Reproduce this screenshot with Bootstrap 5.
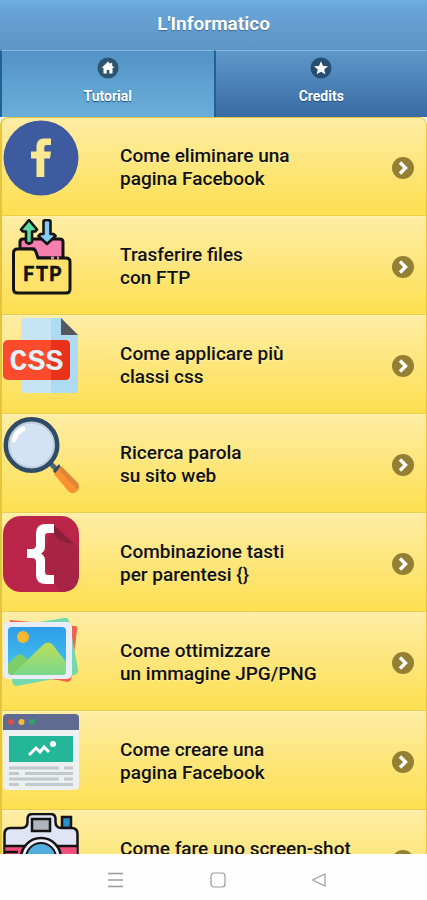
<!DOCTYPE html>
<html lang="it">
<head>
<meta charset="utf-8">
<meta name="viewport" content="width=device-width, initial-scale=1">
<title>L'Informatico</title>
<link href="https://cdn.jsdelivr.net/npm/bootstrap@5.3.0/dist/css/bootstrap.min.css" rel="stylesheet">
<style>
  body { font-family: Roboto, "Liberation Sans", sans-serif; background: #fff; }
  .app-bar { height: 50px; padding-bottom: 2px; background: linear-gradient(#6faee0, #69a3d6 20%, #5f94c6); color: #fff; }
  .app-title { font-size: 19px; line-height: 24px; font-weight: 700; text-shadow: 0 1px 1px #3e6790; }
  .tab-link { height: 67px; padding-top: 6px; color: #fff; font-size: 14px; line-height: 18px; font-weight: 700;
    text-decoration: none; text-shadow: 0 1px 1px #194b7e; border-left: 2px solid #1f6396; border-top: 1px solid #85b8e2;
    background: linear-gradient(#5f97c9, #396ba3); }
  .tab-link.active { background: linear-gradient(#5393c5, #6aaeda); }
  .tab-icon { width: 22px; height: 22px; }
  .topics { background: #fde050; border: 1px solid #e8c43c; border-width: 1px 1px 0 2px; border-radius: 8px 8px 0 0; }
  .topic { height: 99px; padding: 2px 12px 0 1px; color: #111; text-decoration: none;
    border-top: 1px solid #fff2b4; border-bottom: 1px solid #efcd4c; background: linear-gradient(#feeda5, #fddf50); }
  .topic:first-child { height: 98px; border-top: 0; }
  .topic-icon { width: 76px; height: 76px; }
  .topic-name { margin-left: 41px; padding-top: 24px; font-size: 19px; line-height: 23px; font-weight: 500; text-shadow: 0 1px 0 #fff6; }
  .go-icon { width: 22px; height: 22px; margin-top: 37px; }
  .system-bar { height: 46px; padding: 6px 89px 0 97px; background: #fefefe; }
  .system-key { width: 38px; height: 38px; line-height: 0; }
</style>
<script src="https://cdn.jsdelivr.net/npm/bootstrap@5.3.0/dist/js/bootstrap.bundle.min.js"></script>
</head>
<body>
<svg class="d-none" aria-hidden="true">
  <symbol id="go" viewBox="0 0 22 22"><circle cx="11" cy="11" r="11" fill="#938035"/><path d="M8 5.500l5.500 5.500L8 16.500" fill="none" stroke="#fff" stroke-width="3.400"/></symbol>
</svg>
<div class="vh-100 d-flex flex-column overflow-hidden">
  <header class="flex-shrink-0">
    <div class="app-bar d-flex align-items-center justify-content-center"><h1 class="app-title m-0">L'Informatico</h1></div>
    <nav class="row g-0" aria-label="Sezioni">
      <div class="col-6"><a href="#" class="tab-link active d-flex flex-column align-items-center gap-2" aria-current="page">
        <svg class="tab-icon" viewBox="0 0 22 22" aria-hidden="true"><circle cx="11" cy="11" r="10.500" fill="#2b5672"/><path d="M11 4.500L4.500 11h2v5.500h3.200V13h2.600v3.500h3.200V11h2L15.200 8.700V6h-1.700v1z" fill="#fff"/></svg>
        <span>Tutorial</span></a></div>
      <div class="col-6"><a href="#" class="tab-link d-flex flex-column align-items-center gap-2">
        <svg class="tab-icon" viewBox="0 0 22 22" aria-hidden="true"><circle cx="11" cy="11" r="10.500" fill="#264d72"/><path d="M11 4.300l2 4.600 5 .4-3.800 3.200 1.200 4.800L11 14.700l-4.400 2.600 1.200-4.800L4 9.300l5-.4z" fill="#fff"/></svg>
        <span>Credits</span></a></div>
    </nav>
  </header>
  <main class="topics flex-fill overflow-hidden">
    <a href="#" class="topic d-flex align-items-start">
      <svg class="topic-icon flex-shrink-0" viewBox="0 0 76 76" aria-hidden="true"><circle cx="38" cy="38" r="37.500" fill="#3f5ba0"/><path d="M33.500 57V38.500H28V31.500h5.500V27c0-6 3-8.500 8-8.500h6.500v6.500h-4c-2 0-2.700 1-2.700 2.700v3.800H48l-1 7h-5.700V57z" fill="#fbe992"/></svg>
      <span class="topic-name">Come eliminare una<br>pagina Facebook</span>
      <svg class="go-icon ms-auto flex-shrink-0" aria-hidden="true"><use href="#go"/></svg>
    </a>
    <a href="#" class="topic d-flex align-items-start">
      <svg class="topic-icon flex-shrink-0" viewBox="0 0 76 76" aria-hidden="true">
        <path d="M17 36V23q0-3 3-3h37q3 0 3 3v16H34l-3-9H17z" fill="#f580b0" stroke="#141414" stroke-width="3"/>
        <path d="M10.500 34q0-4 4-4H29q3 0 4 3l2 6h28q4 0 4 4v27q0 4-4 4H14.500q-4 0-4-4z" fill="#ffe26a" stroke="#141414" stroke-width="3"/>
        <path d="M48 39h3M54 39h2" stroke="#f580b0" stroke-width="3.200"/>
        <path d="M26 1l-8 9.500 2 2h3V23q3 3 6 0V12.500h3l2-2z" fill="#58dfa0" stroke="#141414" stroke-width="2.600" stroke-linejoin="round"/>
        <path d="M40.500 2q3.500-2 7 0v13h3l2 2L44 25l-8.500-8 2-2h3z" fill="#86cbf5" stroke="#141414" stroke-width="2.600" stroke-linejoin="round"/>
        <text x="20 33 46" y="62" font-family="Lato, Roboto, sans-serif" font-weight="700" font-size="20" fill="#141414" stroke="#141414" stroke-width=".6">FTP</text>
      </svg>
      <span class="topic-name">Trasferire files<br>con FTP</span>
      <svg class="go-icon ms-auto flex-shrink-0" aria-hidden="true"><use href="#go"/></svg>
    </a>
    <a href="#" class="topic d-flex align-items-start">
      <svg class="topic-icon flex-shrink-0" viewBox="0 0 76 76" aria-hidden="true">
        <path d="M22 0h36l17 17v54q0 4-4 4H22q-4 0-4-4V4q0-4 4-4z" fill="#c7e4f5"/><path d="M48 0h10l17 17v54q0 4-4 4H48z" fill="#aedbf4"/>
        <path d="M58 0v17h17z" fill="#57585f"/><rect y="22" width="67" height="40" rx="5" fill="#fc4a2c"/><path d="M48 22h14q5 0 5 5v30q0 5-5 5H48z" fill="#e8321c"/>
        <text x="33.500" y="52" text-anchor="middle" font-family="Liberation Mono, monospace" font-weight="700" font-size="30" fill="#e3f2fa">CSS</text>
      </svg>
      <span class="topic-name">Come applicare più<br>classi css</span>
      <svg class="go-icon ms-auto flex-shrink-0" aria-hidden="true"><use href="#go"/></svg>
    </a>
    <a href="#" class="topic d-flex align-items-start">
      <svg class="topic-icon flex-shrink-0" viewBox="0 0 76 76" aria-hidden="true">
        <path d="M47 46l8 8" stroke="#516472" stroke-width="5"/><path d="M50 54l6-7 3 5-6 6z" fill="#334b5f"/>
        <path d="M51 57l7-7 16 16q3 4 0 8t-8 1z" fill="#fa922f"/><path d="M55 52l3-3 17 17q2 4 0 7z" fill="#dd853b"/>
        <circle cx="28.500" cy="28" r="25.500" fill="#d3e3f3" stroke="#2f4b66" stroke-width="5"/><circle cx="28.500" cy="28" r="22.500" fill="none" stroke="#bccddd" stroke-width="2"/>
        <path d="M11 23q2-8 9-11" fill="none" stroke="#fff" stroke-width="5" stroke-linecap="round"/>
      </svg>
      <span class="topic-name">Ricerca parola<br>su sito web</span>
      <svg class="go-icon ms-auto flex-shrink-0" aria-hidden="true"><use href="#go"/></svg>
    </a>
    <a href="#" class="topic d-flex align-items-start">
      <svg class="topic-icon flex-shrink-0" viewBox="0 0 76 76" aria-hidden="true">
        <rect width="76" height="76" rx="18" fill="#bc254a"/><path d="M51 9l25 23v26q0 18-18 18l-7-8-12-30z" fill="#a82446"/><path d="M51 9l20 19-14-3-6-7z" fill="#8c1f3a"/>
        <path d="M51 8v9h-6q-3 0-3 3v11q0 4-4 6.500 4 2.500 4 6.500v12q0 3 3 3h6v9H43q-10 0-10-9V46q0-4-4-4h-5v-9h5q4 0 4-4V17q0-9 10-9z" fill="#fff"/>
      </svg>
      <span class="topic-name">Combinazione tasti<br>per parentesi {}</span>
      <svg class="go-icon ms-auto flex-shrink-0" aria-hidden="true"><use href="#go"/></svg>
    </a>
    <a href="#" class="topic d-flex align-items-start">
      <svg class="topic-icon flex-shrink-0" viewBox="0 0 76 76" aria-hidden="true">
        <defs><linearGradient id="sky" x2="0" y2="1"><stop stop-color="#2d9de9"/><stop offset="1" stop-color="#49c7ec"/></linearGradient><linearGradient id="hill" x2="0" y2="1"><stop stop-color="#bdde58"/><stop offset="1" stop-color="#78d88d"/></linearGradient></defs>
        <path d="M7 5l65 6q3 0 2 4l-6 49q-1 3-4 2L7 60z" fill="#f3634a"/><path d="M10 11L61 3q4-1 5 3l9 48q1 5-4 6L14 71q-4 0-5-5z" fill="#72d9ac"/><path d="M45 62l24-3-1 5q-1 3-4 3z" fill="#f3634a"/>
        <rect y="7" width="69" height="57" rx="5" fill="#e9edfb"/><rect x="5" y="12" width="58" height="48" rx="4" fill="url(#sky)"/>
        <circle cx="20" cy="22" r="6" fill="#f8b72f"/><path d="M5 49l8-8q4-3 8 0l7 7-10 12H9q-4 0-4-4z" fill="#7dce68"/>
        <path d="M9 60l32-31q4-3 8 0l14 18v9q0 4-4 4z" fill="url(#hill)"/>
      </svg>
      <span class="topic-name">Come ottimizzare<br>un immagine JPG/PNG</span>
      <svg class="go-icon ms-auto flex-shrink-0" aria-hidden="true"><use href="#go"/></svg>
    </a>
    <a href="#" class="topic d-flex align-items-start">
      <svg class="topic-icon flex-shrink-0" viewBox="0 0 76 76" aria-hidden="true">
        <rect width="76" height="76" rx="4" fill="#edf0f1"/><path d="M0 16V4q0-4 4-4h68q4 0 4 4v12z" fill="#5f6b91"/>
        <circle cx="8" cy="8" r="3" fill="#d94f43"/><circle cx="18.500" cy="8" r="3" fill="#f0bd35"/><circle cx="29" cy="8" r="3" fill="#2ca46a"/>
        <rect x="6" y="22" width="64" height="26" fill="#24b699"/><path d="M26 41l7-7 4 4 4-5 5 5" fill="none" stroke="#fff" stroke-width="3"/><circle cx="50" cy="30" r="3" fill="#fff"/>
        <path d="M6 54h50M61 54h9M6 59.500h10M22 59.500h48M6 65h50M61 65h9M6 70.500h10M22 70.500h48" stroke="#c2c9ce" stroke-width="3"/>
      </svg>
      <span class="topic-name">Come creare una<br>pagina Facebook</span>
      <svg class="go-icon ms-auto flex-shrink-0" aria-hidden="true"><use href="#go"/></svg>
    </a>
    <a href="#" class="topic d-flex align-items-start">
      <svg class="topic-icon flex-shrink-0" viewBox="0 0 76 76" aria-hidden="true">
        <path d="M59 15V4h9v11z" fill="#2592cb" stroke="#141414" stroke-width="2.500"/>
        <path d="M1.500 66V21q0-6 6-6h11q6 0 6-6V6q0-5 5-5h18q5 0 5 5v3q0 6 6 6h10q6 0 6 6v45q0 4-4 4h-65q-4 0-4-4z" fill="#dfe5f5" stroke="#141414" stroke-width="2.500"/>
        <path d="M2.500 33h71v31h-71z" fill="#f24e7d"/><path d="M1 33h74M1 39h14" stroke="#141414" stroke-width="2.500"/>
        <rect x="29" y="6" width="18" height="12" fill="#aeb5bd" stroke="#141414" stroke-width="2.500"/>
        <circle cx="38" cy="45" r="20" fill="#eef1fa" stroke="#141414" stroke-width="2.500"/><circle cx="38" cy="45" r="15" fill="#53aedd" stroke="#141414" stroke-width="2"/>
      </svg>
      <span class="topic-name">Come fare uno screen-shot</span>
      <svg class="go-icon ms-auto flex-shrink-0" aria-hidden="true"><use href="#go"/></svg>
    </a>
  </main>
  <footer class="system-bar flex-shrink-0 d-flex justify-content-between align-items-center">
    <button type="button" class="system-key btn p-0 border-0" aria-label="Menu"><svg width="16" height="16" aria-hidden="true"><path d="M0 1.500h15M0 8h15M0 14.500h15" stroke="#999" stroke-width="1.300"/></svg></button>
    <button type="button" class="system-key btn p-0 border-0" aria-label="Home"><svg width="16" height="16" aria-hidden="true"><rect x="1" y="1" width="14" height="14" rx="3" fill="none" stroke="#999" stroke-width="1.200"/></svg></button>
    <button type="button" class="system-key btn p-0 border-0" aria-label="Indietro"><svg width="16" height="16" aria-hidden="true"><path d="M14 2v12L1.500 8z" fill="none" stroke="#999" stroke-width="1.200" stroke-linejoin="round"/></svg></button>
  </footer>
</div>
</body>
</html>
